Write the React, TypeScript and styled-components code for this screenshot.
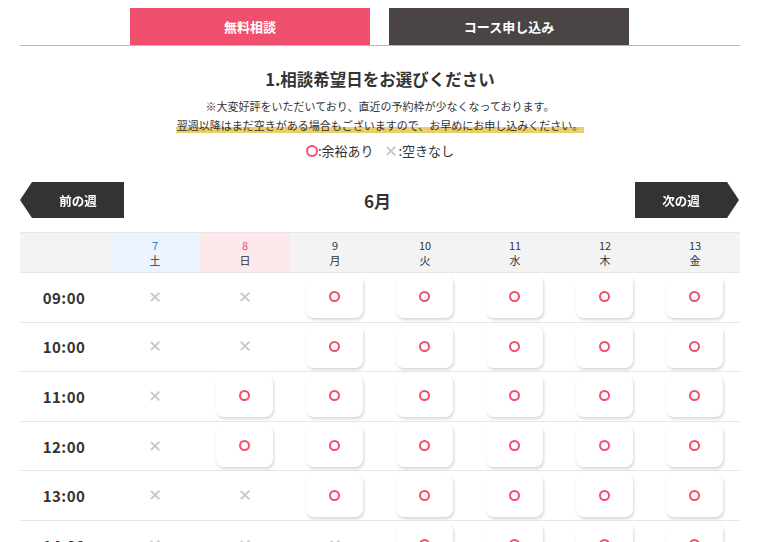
import React from "react";
import styled, { createGlobalStyle } from "styled-components";

const GlobalStyle = createGlobalStyle`
  html, body { margin: 0; padding: 0; background: #fff; }
  body { font-family: "Noto Sans CJK JP", "Noto Sans", sans-serif; color: #333; }
`;

const Page = styled.div`
  width: 720px;
  margin-left: 20px;
  padding-top: 8px;
`;

const Tabs = styled.div`
  display: flex;
  justify-content: center;
  gap: 19px;
  padding-right: 1px;
  border-bottom: 1px solid #b8b8b8;
`;

const Tab = styled.div<{ $active?: boolean }>`
  width: 240px;
  height: 37px;
  display: flex;
  align-items: center;
  justify-content: center;
  font-size: 13px;
  font-weight: 700;
  color: #fff;
  background: ${(p) => (p.$active ? "#f04f6d" : "#4a4544")};
`;

const Title = styled.h2`
  margin: 20px 0 0;
  text-align: center;
  font-size: 16.5px;
  font-weight: 700;
  line-height: 26px;
  color: #333;
`;

const Note = styled.p`
  margin: 5px 0 0;
  text-align: center;
  font-size: 11px;
  line-height: 19px;
  color: #333;
`;

const Marker = styled.span`
  background: linear-gradient(transparent 62%, #e8cf6c 62%);
  padding: 0 1px;
`;

const Legend = styled.div`
  display: flex;
  justify-content: center;
  gap: 13px;
  margin-top: 6px;
  font-size: 13px;
  line-height: 20px;
  color: #333;
`;

const LegendItem = styled.span`
  display: inline-flex;
  align-items: center;
`;

const Ring = styled.span<{ $size?: number }>`
  display: inline-block;
  box-sizing: border-box;
  width: ${(p) => p.$size ?? 11}px;
  height: ${(p) => p.$size ?? 11}px;
  border: 2px solid #f04f6d;
  border-radius: 50%;
`;

const Cross = styled.span<{ $size?: number }>`
  display: inline-block;
  position: relative;
  width: ${(p) => p.$size ?? 11}px;
  height: ${(p) => p.$size ?? 11}px;
  &::before, &::after {
    content: "";
    position: absolute;
    left: 50%;
    top: 50%;
    width: 130%;
    height: 2px;
    background: #c9c9c9;
  }
  &::before { transform: translate(-50%, -50%) rotate(45deg); }
  &::after { transform: translate(-50%, -50%) rotate(-45deg); }
`;

const Nav = styled.div`
  display: flex;
  align-items: center;
  justify-content: space-between;
  margin-top: 21px;
  height: 36px;
`;

const NavButton = styled.div<{ $dir: "prev" | "next" }>`
  width: 104px;
  height: 36px;
  box-sizing: border-box;
  display: flex;
  align-items: center;
  justify-content: center;
  background: #333;
  color: #fff;
  font-size: 12.5px;
  font-weight: 700;
  margin-right: ${(p) => (p.$dir === "next" ? "1px" : "0")};
  padding-left: ${(p) => (p.$dir === "prev" ? "12px" : "0")};
  padding-right: ${(p) => (p.$dir === "next" ? "12px" : "0")};
  clip-path: ${(p) =>
    p.$dir === "prev"
      ? "polygon(12px 0, 100% 0, 100% 100%, 12px 100%, 0 50%)"
      : "polygon(0 0, calc(100% - 12px) 0, 100% 50%, calc(100% - 12px) 100%, 0 100%)"};
  filter: drop-shadow(1px 1px 0 rgba(0,0,0,0.15));
`;

const Month = styled.div`
  font-size: 17px;
  font-weight: 700;
  color: #333;
  margin-right: 4px;
`;

const Table = styled.div`
  margin-top: 14px;
  display: grid;
  grid-template-columns: repeat(8, 90px);
`;

const HeadCell = styled.div<{ $kind?: "sat" | "sun" }>`
  height: 41px;
  box-sizing: border-box;
  border-top: 1px solid #e6e6e6;
  border-bottom: 1px solid #e6e6e6;
  background: ${(p) =>
    p.$kind === "sat" ? "#eaf3fe" : p.$kind === "sun" ? "#fde9ec" : "#f3f3f3"};
  display: flex;
  flex-direction: column;
  align-items: center;
  justify-content: center;
  font-size: 11px;
  line-height: 15px;
  color: #333;
`;

const DayNum = styled.span<{ $kind?: "sat" | "sun" }>`
  color: ${(p) =>
    p.$kind === "sat" ? "#2f7ce8" : p.$kind === "sun" ? "#f04f6d" : "#333"};
`;

const TimeCell = styled.div`
  height: 49.6px;
  box-sizing: border-box;
  border-bottom: 1px solid #e6e6e6;
  display: flex;
  align-items: center;
  justify-content: center;
  font-size: 15px;
  font-weight: 700;
  color: #333;
  letter-spacing: 0.4px;
  padding-right: 2px;
`;

const SlotCell = styled.div`
  height: 49.6px;
  box-sizing: border-box;
  border-bottom: 1px solid #e6e6e6;
  display: flex;
  align-items: center;
  justify-content: center;
  padding-bottom: 1px;
  padding-right: 1px;
`;

const SlotButton = styled.div`
  width: 57px;
  height: 43px;
  box-sizing: border-box;
  background: #fff;
  border-radius: 8px;
  box-shadow: 1px 2px 3px rgba(0, 0, 0, 0.16);
  display: flex;
  align-items: center;
  justify-content: center;
`;

type Kind = "sat" | "sun" | undefined;

const days: { n: number; w: string; kind: Kind }[] = [
  { n: 7, w: "土", kind: "sat" },
  { n: 8, w: "日", kind: "sun" },
  { n: 9, w: "月", kind: undefined },
  { n: 10, w: "火", kind: undefined },
  { n: 11, w: "水", kind: undefined },
  { n: 12, w: "木", kind: undefined },
  { n: 13, w: "金", kind: undefined },
];

const rows: { t: string; a: boolean[] }[] = [
  { t: "09:00", a: [false, false, true, true, true, true, true] },
  { t: "10:00", a: [false, false, true, true, true, true, true] },
  { t: "11:00", a: [false, true, true, true, true, true, true] },
  { t: "12:00", a: [false, true, true, true, true, true, true] },
  { t: "13:00", a: [false, false, true, true, true, true, true] },
  { t: "14:00", a: [false, false, false, true, true, true, true] },
];

export default function App() {
  return (
    <>
      <GlobalStyle />
      <Page>
        <Tabs>
          <Tab $active>無料相談</Tab>
          <Tab>コース申し込み</Tab>
        </Tabs>
        <Title>1.相談希望日をお選びください</Title>
        <Note>
          ※大変好評をいただいており、直近の予約枠が少なくなっております。
          <br />
          <Marker>翌週以降はまだ空きがある場合もございますので、お早めにお申し込みください。</Marker>
        </Note>
        <Legend>
          <LegendItem>
            <Ring $size={12} />:余裕あり
          </LegendItem>
          <LegendItem>
            <Cross $size={9} />
            &nbsp;:空きなし
          </LegendItem>
        </Legend>
        <Nav>
          <NavButton $dir="prev">前の週</NavButton>
          <Month>6月</Month>
          <NavButton $dir="next">次の週</NavButton>
        </Nav>
        <Table>
          <HeadCell />
          {days.map((d) => (
            <HeadCell key={d.n} $kind={d.kind}>
              <DayNum $kind={d.kind}>{d.n}</DayNum>
              <span>{d.w}</span>
            </HeadCell>
          ))}
          {rows.map((r) => (
            <React.Fragment key={r.t}>
              <TimeCell>{r.t}</TimeCell>
              {r.a.map((ok, i) => (
                <SlotCell key={i}>
                  {ok ? (
                    <SlotButton>
                      <Ring $size={11} />
                    </SlotButton>
                  ) : (
                    <Cross $size={9} />
                  )}
                </SlotCell>
              ))}
            </React.Fragment>
          ))}
        </Table>
      </Page>
    </>
  );
}
